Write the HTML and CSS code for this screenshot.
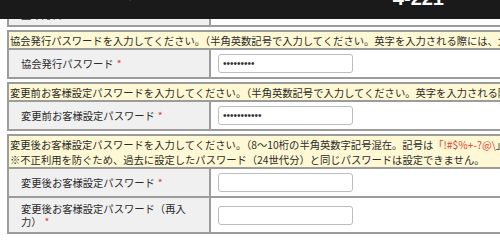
FILE: index.html
```html
<!DOCTYPE html>
<html lang="ja">
<head>
<meta charset="utf-8">
<title>パスワード変更</title>
<link rel="stylesheet" href="styles.css">
</head>
<body>
<div class="topbar">
  <span class="tb-left">ご登録情報の変更</span>
  <span class="tb-right">4-221</span>
</div>
<div class="content">
  <div class="section">
    <div class="note">生年月日を入力してください。</div>
    <div class="row">
      <div class="label"><span>生年月日</span></div>
      <div class="value"><span class="plain">0000/00/00</span></div>
    </div>
  </div>

  <div class="section">
    <div class="note">協会発行パスワードを入力してください。（半角英数記号で入力してください。英字を入力される際には、大文字・小文字を区別してください。）</div>
    <div class="row">
      <div class="label"><span>協会発行パスワード<span class="req">*</span></span></div>
      <div class="value"><input class="field" type="password" value="123456789"></div>
    </div>
  </div>

  <div class="section">
    <div class="note">変更前お客様設定パスワードを入力してください。（半角英数記号で入力してください。英字を入力される際には、大文字・小文字を区別してください。）</div>
    <div class="row">
      <div class="label"><span>変更前お客様設定パスワード<span class="req">*</span></span></div>
      <div class="value"><input class="field" type="password" value="12345678901"></div>
    </div>
  </div>

  <div class="section">
    <div class="note">変更後お客様設定パスワードを入力してください。（8～10桁の半角英数字記号混在。記号は<span class="sym">「!#$%+-?@\</span>」）<br>※不正利用を防ぐため、過去に設定したパスワード（24世代分）と同じパスワードは設定できません。</div>
    <div class="row">
      <div class="label"><span>変更後お客様設定パスワード<span class="req">*</span></span></div>
      <div class="value"><input class="field" type="password"></div>
    </div>
    <div class="row">
      <div class="label"><span>変更後お客様設定パスワード（再入力）<span class="req">*</span></span></div>
      <div class="value"><input class="field" type="password"></div>
    </div>
  </div>
</div>
</body>
</html>
```
FILE: styles.css
```css
html, body {
  margin: 0;
  padding: 0;
  overflow: hidden;
  background: #ffffff;
}
body {
  font-family: "Noto Sans CJK JP", "Noto Sans", sans-serif;
  font-size: 10.3px;
  color: #2b2b2b;
}
.topbar {
  position: fixed;
  top: 0;
  left: 0;
  right: 0;
  height: 19px;
  background: #1b1a1a;
  overflow: hidden;
  z-index: 10;
  display: flex;
  align-items: flex-start;
}
.tb-left {
  color: #ffffff;
  font-size: 10px;
  line-height: 10px;
  letter-spacing: 1px;
  margin-left: 63px;
  margin-top: -10px;
  white-space: nowrap;
}
.tb-right {
  color: #ffffff;
  font-family: "Liberation Sans", sans-serif;
  font-weight: bold;
  font-size: 20px;
  line-height: 20px;
  margin-left: auto;
  margin-right: 56px;
  margin-top: -12px;
  white-space: nowrap;
}
.content {
  margin-top: -16px;
  padding-left: 7px;
}
.section {
  width: 640px;
  border: 2px solid #9c9c9c;
  margin-bottom: 3px;
}
.note {
  background: #fff8d4;
  line-height: 15px;
  padding: 0.5px 1px;
  white-space: nowrap;
  border-bottom: 2px solid #9c9c9c;
}
.sym {
  color: #e2382e;
}
.row {
  display: flex;
}
.row + .row {
  border-top: 2px solid #9c9c9c;
}
.label {
  flex: none;
  box-sizing: border-box;
  width: 202px;
  padding: 4px 12px;
  line-height: 13px;
  background: #f0f0f0;
  border-right: 2px solid #9c9c9c;
  display: flex;
  align-items: center;
}
.req {
  color: #e2382e;
  margin-left: 3px;
}
.value {
  flex: 1;
  padding: 4px 7px;
  display: flex;
  align-items: center;
}
.plain {
  font-family: "Liberation Sans", sans-serif;
  font-size: 11px;
}
.field {
  box-sizing: border-box;
  width: 135px;
  height: 19px;
  margin: 0;
  padding: 0 4px;
  border: 1px solid #bdbdbd;
  border-radius: 3px;
  background: #ffffff;
  font-family: "Liberation Sans", sans-serif;
  font-size: 10px;
  color: #333333;
  outline: none;
}
```
